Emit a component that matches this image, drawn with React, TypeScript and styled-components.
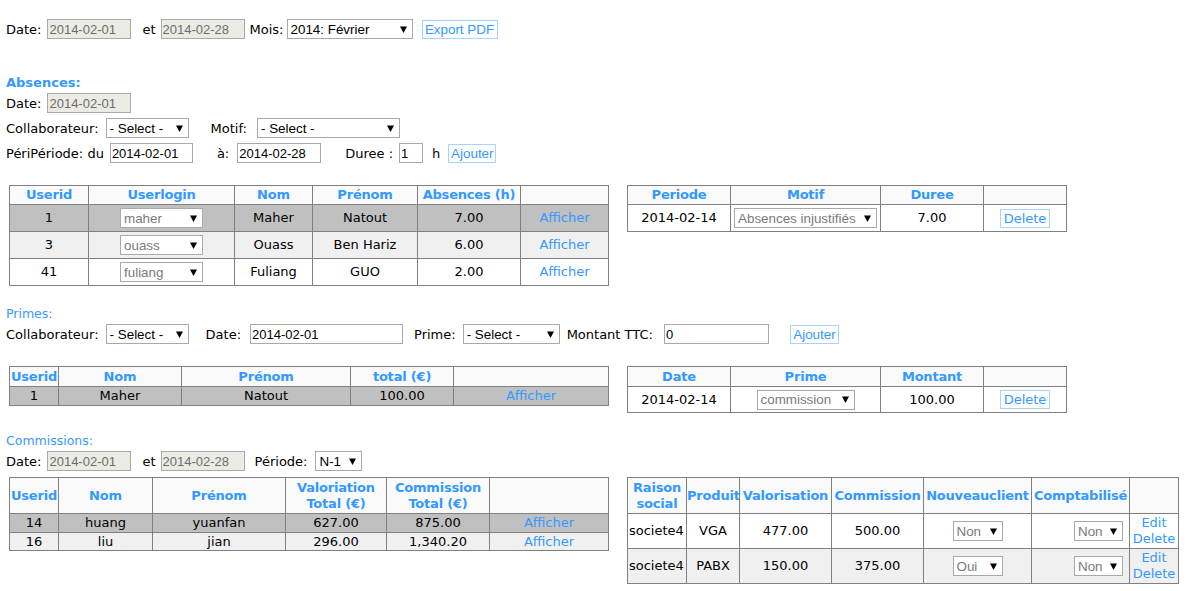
import React from 'react';
import styled, { createGlobalStyle } from 'styled-components';

const BLUE = '#3399ff';
const BORDER = '#808080';

const GlobalStyle = createGlobalStyle`
  html, body { margin: 0; padding: 0; background: #fff; }
  body {
    font-family: "DejaVu Sans", Verdana, sans-serif;
    font-size: 13px;
    color: #000;
  }
`;

const Page = styled.div`
  display: flex;
  flex-direction: column;
  align-items: flex-start;
  padding: 19px 0 0 6px;
`;

const FormRow = styled.div<{ $mt?: number }>`
  display: flex;
  align-items: center;
  height: 20px;
  margin-top: ${(p) => p.$mt ?? 0}px;
  white-space: nowrap;
`;

const Label = styled.span<{ $ml?: number }>`
  margin-left: ${(p) => p.$ml ?? 0}px;
  line-height: 15px;
`;

const SectionTitle = styled.div<{ $mt: number; $bold?: boolean }>`
  margin-top: ${(p) => p.$mt}px;
  color: ${BLUE};
  font-weight: ${(p) => (p.$bold ? 'bold' : 'normal')};
  font-size: ${(p) => (p.$bold ? 13 : 12.5)}px;
  line-height: 15px;
`;

const TextInput = styled.input<{ $w: number; $ml?: number; $ro?: boolean }>`
  box-sizing: border-box;
  width: ${(p) => p.$w}px;
  height: 20px;
  margin: 0 0 0 ${(p) => p.$ml ?? 0}px;
  padding: 0 1px;
  border: 1px solid #a9a9a9;
  border-radius: 0;
  background: ${(p) => (p.$ro ? '#ebebe4' : '#fff')};
  color: ${(p) => (p.$ro ? '#6d6d6d' : '#000')};
  font-family: "Liberation Sans", Arial, sans-serif;
  font-size: 13px;
  outline: none;
`;

const SelectWrap = styled.span<{ $w: number; $ml?: number }>`
  box-sizing: border-box;
  display: inline-flex;
  align-items: center;
  width: ${(p) => p.$w}px;
  height: 20px;
  margin-left: ${(p) => p.$ml ?? 0}px;
  padding-right: 5px;
  border: 1px solid #a9a9a9;
  background: #fff;
  vertical-align: middle;
`;

const NativeSelect = styled.select<{ $muted?: boolean }>`
  appearance: none;
  -webkit-appearance: none;
  flex: 1;
  min-width: 0;
  height: 100%;
  margin: 0;
  padding: 0 0 0 3px;
  border: 0;
  background: transparent;
  color: ${(p) => (p.$muted ? '#7a7a7a' : '#000')};
  font-family: "Liberation Sans", Arial, sans-serif;
  font-size: 13.4px;
  outline: none;
`;

const Arrow = () => (
  <svg width="7" height="7" viewBox="0 0 7 7" aria-hidden="true">
    <polygon points="0,0.5 7,0.5 3.5,7" fill="#000" />
  </svg>
);

const Select = ({ w, ml, value, muted }: { w: number; ml?: number; value: string; muted?: boolean }) => (
  <SelectWrap $w={w} $ml={ml}>
    <NativeSelect $muted={muted} defaultValue={value}>
      <option>{value}</option>
    </NativeSelect>
    <Arrow />
  </SelectWrap>
);

const Button = styled.button<{ $ml?: number; $w: number; $verdana?: boolean }>`
  box-sizing: border-box;
  width: ${(p) => p.$w}px;
  height: 19px;
  margin: 0 0 0 ${(p) => p.$ml ?? 0}px;
  padding: 0;
  border: 1px solid #a8d3ff;
  border-radius: 0;
  background: #fff;
  color: ${BLUE};
  font-family: ${(p) => (p.$verdana ? '"DejaVu Sans", Verdana, sans-serif' : '"Liberation Sans", Arial, sans-serif')};
  font-size: ${(p) => (p.$verdana ? 13 : 13.4)}px;
  line-height: 17px;
  cursor: pointer;
`;

const TablesRow = styled.div<{ $mt: number }>`
  display: flex;
  align-items: flex-start;
  gap: 18px;
  margin: ${(p) => p.$mt}px 0 0 3px;
`;

const Table = styled.table<{ $w: number }>`
  width: ${(p) => p.$w}px;
  border-collapse: collapse;
  table-layout: fixed;
  font-family: "DejaVu Sans", Verdana, sans-serif;
  font-size: 13px;
`;

const Th = styled.th<{ $h: number }>`
  height: ${(p) => p.$h}px;
  padding: 0;
  border: 1px solid ${BORDER};
  background: #fafafa;
  color: ${BLUE};
  font-weight: bold;
  line-height: 16px;
  text-align: center;
  white-space: normal;
  letter-spacing: -0.2px;
`;

type Tone = 'gray' | 'light' | 'white';
const toneBg: Record<Tone, string> = { gray: '#c0c0c0', light: '#f0f0f0', white: '#fff' };

const Tr = styled.tr<{ $tone: Tone }>`
  background: ${(p) => toneBg[p.$tone]};
`;

const Td = styled.td<{ $h: number; $align?: 'left' | 'center' | 'right' }>`
  height: ${(p) => p.$h}px;
  padding: 0 ${(p) => (p.$align === 'right' ? 6 : 1)}px 0 1px;
  border: 1px solid ${BORDER};
  text-align: ${(p) => p.$align ?? 'center'};
  line-height: 16px;
  white-space: nowrap;
`;

const Link = styled.a`
  display: block;
  color: ${BLUE};
  text-decoration: none;
  cursor: pointer;
`;

const Cols = ({ widths }: { widths: number[] }) => (
  <colgroup>
    {widths.map((w, i) => (
      <col key={i} style={{ width: w }} />
    ))}
  </colgroup>
);

const absRows = [
  { id: '1', login: 'maher', nom: 'Maher', prenom: 'Natout', h: '7.00', tone: 'gray' as Tone },
  { id: '3', login: 'ouass', nom: 'Ouass', prenom: 'Ben Hariz', h: '6.00', tone: 'light' as Tone },
  { id: '41', login: 'fuliang', nom: 'Fuliang', prenom: 'GUO', h: '2.00', tone: 'white' as Tone },
];

const comRows = [
  { id: '14', nom: 'huang', prenom: 'yuanfan', val: '627.00', com: '875.00', tone: 'gray' as Tone, h: 18 },
  { id: '16', nom: 'liu', prenom: 'jian', val: '296.00', com: '1,340.20', tone: 'light' as Tone, h: 17 },
];

const detailRows = [
  { soc: 'societe4', prod: 'VGA', val: '477.00', com: '500.00', nc: 'Non', tone: 'white' as Tone },
  { soc: 'societe4', prod: 'PABX', val: '150.00', com: '375.00', nc: 'Oui', tone: 'light' as Tone },
];

export default function App() {
  return (
    <>
      <GlobalStyle />
      <Page>
        <FormRow>
          <Label>Date:</Label>
          <TextInput $w={84} $ml={6} $ro readOnly value="2014-02-01" />
          <Label $ml={11}>et</Label>
          <TextInput $w={84} $ml={5} $ro readOnly value="2014-02-28" />
          <Label $ml={5}>Mois:</Label>
          <Select w={126} ml={3} value="2014: Février" />
          <Button $w={76} $ml={9}>Export PDF</Button>
        </FormRow>

        <SectionTitle $mt={36} $bold>Absences:</SectionTitle>
        <FormRow $mt={3}>
          <Label>Date:</Label>
          <TextInput $w={84} $ml={6} $ro readOnly value="2014-02-01" />
        </FormRow>
        <FormRow $mt={5}>
          <Label>Collaborateur:</Label>
          <Select w={83} ml={7} value="- Select -" />
          <Label $ml={22}>Motif:</Label>
          <Select w={143} ml={10} value="- Select -" />
        </FormRow>
        <FormRow $mt={5}>
          <Label>PériPériode: du</Label>
          <TextInput $w={83} $ml={6} readOnly value="2014-02-01" />
          <Label $ml={24}>à:</Label>
          <TextInput $w={84} $ml={8} readOnly value="2014-02-28" />
          <Label $ml={24}>Duree :</Label>
          <TextInput $w={24} $ml={6} readOnly value="1" />
          <Label $ml={9}>h</Label>
          <Button $w={48} $ml={8}>Ajouter</Button>
        </FormRow>

        <TablesRow $mt={22}>
          <Table $w={600}>
            <Cols widths={[79, 146, 78, 105, 103, 88]} />
            <thead>
              <tr>
                <Th $h={18}>Userid</Th>
                <Th $h={18}>Userlogin</Th>
                <Th $h={18}>Nom</Th>
                <Th $h={18}>Prénom</Th>
                <Th $h={18}>Absences (h)</Th>
                <Th $h={18}></Th>
              </tr>
            </thead>
            <tbody>
              {absRows.map((r) => (
                <Tr key={r.id} $tone={r.tone}>
                  <Td $h={26}>{r.id}</Td>
                  <Td $h={26}>
                    <Select w={83} value={r.login} muted />
                  </Td>
                  <Td $h={26}>{r.nom}</Td>
                  <Td $h={26}>{r.prenom}</Td>
                  <Td $h={26}>{r.h}</Td>
                  <Td $h={26}>
                    <Link>Afficher</Link>
                  </Td>
                </Tr>
              ))}
            </tbody>
          </Table>

          <Table $w={440}>
            <Cols widths={[103, 150, 103, 83]} />
            <thead>
              <tr>
                <Th $h={18}>Periode</Th>
                <Th $h={18}>Motif</Th>
                <Th $h={18}>Duree</Th>
                <Th $h={18}></Th>
              </tr>
            </thead>
            <tbody>
              <Tr $tone="white">
                <Td $h={26}>2014-02-14</Td>
                <Td $h={26}>
                  <Select w={143} value="Absences injustifiés" muted />
                </Td>
                <Td $h={26}>7.00</Td>
                <Td $h={26}>
                  <Button $w={50} $verdana>Delete</Button>
                </Td>
              </Tr>
            </tbody>
          </Table>
        </TablesRow>

        <SectionTitle $mt={20}>Primes:</SectionTitle>
        <FormRow $mt={3}>
          <Label>Collaborateur:</Label>
          <Select w={83} ml={7} value="- Select -" />
          <Label $ml={17}>Date:</Label>
          <TextInput $w={153} $ml={9} readOnly value="2014-02-01" />
          <Label $ml={11}>Prime:</Label>
          <Select w={97} ml={7} value="- Select -" />
          <Label $ml={7}>Montant TTC:</Label>
          <TextInput $w={105} $ml={11} readOnly value="0" />
          <Button $w={49} $ml={21}>Ajouter</Button>
        </FormRow>

        <TablesRow $mt={22}>
          <Table $w={600}>
            <Cols widths={[49, 123, 169, 103, 155]} />
            <thead>
              <tr>
                <Th $h={19}>Userid</Th>
                <Th $h={19}>Nom</Th>
                <Th $h={19}>Prénom</Th>
                <Th $h={19}>total (€)</Th>
                <Th $h={19}></Th>
              </tr>
            </thead>
            <tbody>
              <Tr $tone="gray">
                <Td $h={18}>1</Td>
                <Td $h={18}>Maher</Td>
                <Td $h={18}>Natout</Td>
                <Td $h={18}>100.00</Td>
                <Td $h={18}>
                  <Link>Afficher</Link>
                </Td>
              </Tr>
            </tbody>
          </Table>

          <Table $w={440}>
            <Cols widths={[103, 150, 103, 83]} />
            <thead>
              <tr>
                <Th $h={19}>Date</Th>
                <Th $h={19}>Prime</Th>
                <Th $h={19}>Montant</Th>
                <Th $h={19}></Th>
              </tr>
            </thead>
            <tbody>
              <Tr $tone="white">
                <Td $h={25}>2014-02-14</Td>
                <Td $h={25}>
                  <Select w={98} value="commission" muted />
                </Td>
                <Td $h={25}>100.00</Td>
                <Td $h={25}>
                  <Button $w={50} $verdana>Delete</Button>
                </Td>
              </Tr>
            </tbody>
          </Table>
        </TablesRow>

        <SectionTitle $mt={20}>Commissions:</SectionTitle>
        <FormRow $mt={3}>
          <Label>Date:</Label>
          <TextInput $w={84} $ml={6} $ro readOnly value="2014-02-01" />
          <Label $ml={11}>et</Label>
          <TextInput $w={84} $ml={5} $ro readOnly value="2014-02-28" />
          <Label $ml={10}>Période:</Label>
          <Select w={47} ml={8} value="N-1" />
        </FormRow>

        <TablesRow $mt={6}>
          <Table $w={600}>
            <Cols widths={[49, 94, 133, 101, 103, 119]} />
            <thead>
              <tr>
                <Th $h={35}>Userid</Th>
                <Th $h={35}>Nom</Th>
                <Th $h={35}>Prénom</Th>
                <Th $h={35}>Valoriation Total (€)</Th>
                <Th $h={35}>Commission Total (€)</Th>
                <Th $h={35}></Th>
              </tr>
            </thead>
            <tbody>
              {comRows.map((r) => (
                <Tr key={r.id} $tone={r.tone}>
                  <Td $h={r.h}>{r.id}</Td>
                  <Td $h={r.h}>{r.nom}</Td>
                  <Td $h={r.h}>{r.prenom}</Td>
                  <Td $h={r.h}>{r.val}</Td>
                  <Td $h={r.h}>{r.com}</Td>
                  <Td $h={r.h}>
                    <Link>Afficher</Link>
                  </Td>
                </Tr>
              ))}
            </tbody>
          </Table>

          <Table $w={552}>
            <Cols widths={[59, 53, 92, 92, 108, 98, 49]} />
            <thead>
              <tr>
                <Th $h={35}>Raison social</Th>
                <Th $h={35}>Produit</Th>
                <Th $h={35}>Valorisation</Th>
                <Th $h={35}>Commission</Th>
                <Th $h={35}>Nouveauclient</Th>
                <Th $h={35}>Comptabilisé</Th>
                <Th $h={35}></Th>
              </tr>
            </thead>
            <tbody>
              {detailRows.map((r) => (
                <Tr key={r.prod} $tone={r.tone}>
                  <Td $h={34} $align="left">{r.soc}</Td>
                  <Td $h={34}>{r.prod}</Td>
                  <Td $h={34}>{r.val}</Td>
                  <Td $h={34}>{r.com}</Td>
                  <Td $h={34}>
                    <Select w={50} value={r.nc} muted />
                  </Td>
                  <Td $h={34} $align="right">
                    <Select w={49} value="Non" muted />
                  </Td>
                  <Td $h={34}>
                    <Link>Edit</Link>
                    <Link>Delete</Link>
                  </Td>
                </Tr>
              ))}
            </tbody>
          </Table>
        </TablesRow>
      </Page>
    </>
  );
}
